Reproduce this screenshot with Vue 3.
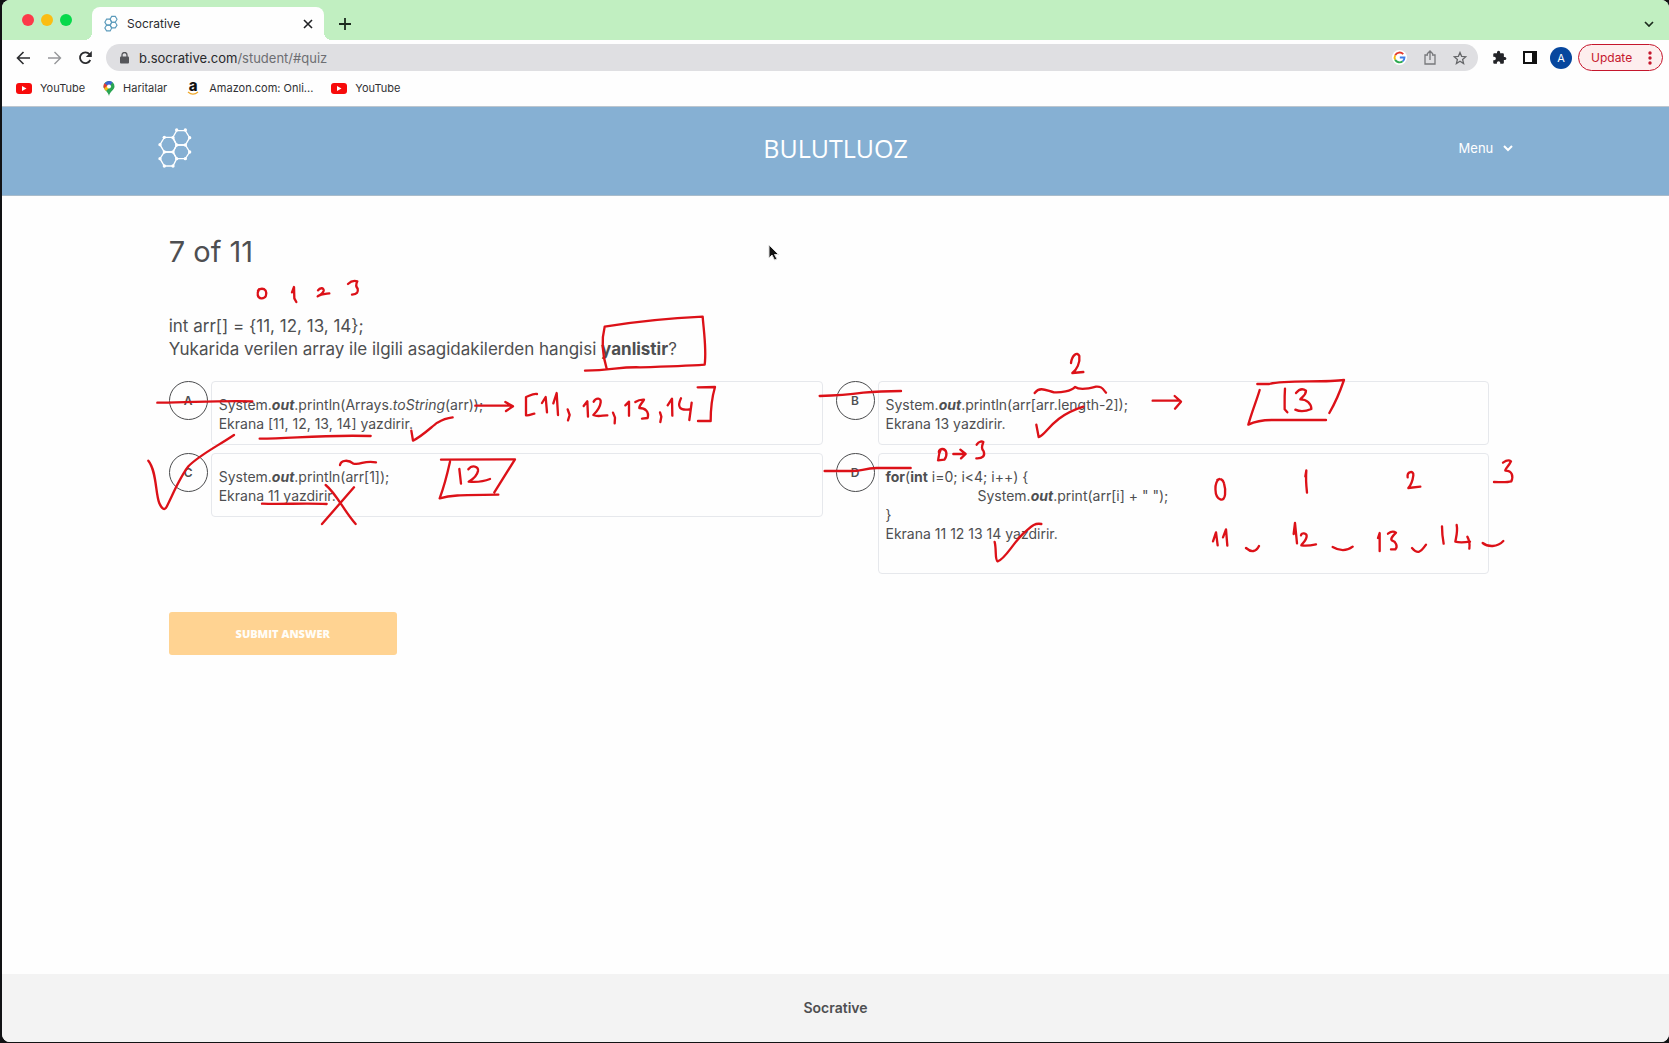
<script setup>
const bookmarks = [
  { icon: 'youtube', label: 'YouTube' },
  { icon: 'maps', label: 'Haritalar' },
  { icon: 'amazon', label: 'Amazon.com: Onli...' },
  { icon: 'youtube', label: 'YouTube' },
]

const hexagons = [
  'M530 393H556L569 414L556 436H530L518 414Z',
  'M493 413H519L530 436L519 457H493L480 435Z',
  'M530 436H556L569 457L556 477H530L519 457Z',
  'M493 457H519L530 477L519 499H493L480 477Z',
]
const hexNodes = [
  [530, 391], [556, 391], [569, 414], [556, 436], [530, 436], [519, 414], [493, 413],
  [480, 435], [493, 457], [519, 457], [569, 457], [556, 477], [530, 477], [480, 477], [493, 499], [519, 499],
]

// Pen strokes grouped by sheet area; every group is drawn at three times its final size.
const ink = [
  {
    x: 140, y: 220,
    strokes: [
      'M357 208C350 220 352 234 364 235C378 236 382 222 377 212C371 204 361 205 354 211',
      'M456 217L462 201L463 235L469 246',
      'M534 211C540 202 552 203 551 212C549 220 538 226 533 229C542 222 552 222 568 220',
      'M624 192C633 183 642 181 652 184C648 192 646 199 653 206C655 216 652 223 636 224',
      'M52 548C140 549 220 541 337 544',
      'M359 656C460 656 530 644 692 648',
      'M814 632L819 662C850 646 875 620 892 608C905 600 920 594 938 592',
      'M25 722C50 752 46 820 58 850C66 868 74 872 80 860C100 820 120 770 146 738C180 704 230 680 282 645',
      'M600 735C603 720 625 718 640 731C665 736 670 720 708 727',
      'M366 851C430 853 500 849 560 852',
      'M557 795C590 822 610 870 647 912M642 802L546 912',
    ],
  },
  {
    x: 400, y: 300,
    strokes: [
      'M555 212C640 210 660 200 720 202C800 200 860 198 914 194C920 150 912 100 908 50C820 54 700 66 614 80C604 120 606 160 620 206',
      'M226 317H336M316 306L339 319L318 333',
      'M411 282C398 280 388 288 378 291V346C386 348 396 342 403 341',
      'M426 309L437 291L441 337M460 310L470 279L474 345',
      'M503 328L509 345L504 361',
      'M551 318L562 304L564 350M581 305C588 292 604 293 602 307C600 325 588 337 580 345C594 352 610 345 622 346',
      'M639 338L645 353L644 370',
      'M676 316L687 305V347M706 306C718 298 726 299 732 299C726 310 717 317 718 324C735 324 748 334 743 354L726 356',
      'M780 337L784 350L781 366M803 316L816 296L817 347M843 295C830 322 840 332 868 328M875 308L868 360',
      'M893 262L945 261C936 292 932 330 932 363H894',
      'M123 479L345 478L283 577M150 485C140 530 132 560 119 595C150 586 170 585 295 584',
      'M178 507L183 551M205 508C216 494 236 498 234 513C230 532 214 540 206 545C230 547 248 546 270 537',
    ],
  },
  {
    x: 810, y: 340,
    strokes: [
      'M783 69C786 45 802 34 808 48C811 68 800 90 787 99L820 96',
      'M29 168C100 166 130 162 160 158C200 154 230 153 273 153',
      'M674 159C690 138 710 152 732 157C752 158 784 154 795 141C810 152 836 146 858 140C878 138 880 150 888 158',
      'M679 254L686 291C710 286 720 232 820 200',
      'M44 393H120C150 394 160 386 200 384H302',
      'M392 330C384 344 386 360 384 361L403 359C414 346 410 326 396 327C388 328 384 335 388 340',
      'M430 342H464M451 329L467 342L453 355',
      'M500 314C507 302 517 304 520 306C515 320 514 326 521 334C526 348 518 356 499 355',
      'M554 606C560 630 554 660 563 664C585 658 605 615 640 580C662 562 670 548 694 552',
    ],
  },
  {
    x: 1140, y: 360,
    strokes: [
      'M38 122H120M104 108L123 125L105 146',
      'M352 72H388C430 60 550 68 612 60C600 95 585 130 568 159M359 90C352 115 334 160 325 194C345 184 365 180 395 180H558',
      'M435 86C433 115 434 130 434 148L442 157M468 99C480 84 490 86 498 92C498 106 484 112 481 118C500 118 514 130 514 147C500 153 480 156 466 149',
      'M238 357C222 366 222 412 241 418C258 424 258 390 252 370C249 358 240 354 232 360',
      'M496 349L499 331C497 355 499 380 501 398',
      'M803 352C800 334 822 330 820 346C818 362 812 376 805 384L841 380',
      'M1089 308C1100 300 1108 300 1113 304C1106 320 1094 326 1096 332C1118 332 1120 350 1114 364C1100 368 1080 366 1062 366',
      'M219 544L228 517L233 556M249 532L258 508L262 557',
      'M461 522L465 489L471 550M483 526C484 516 500 520 500 528C500 542 486 550 484 556C500 558 514 556 528 553',
      'M318 564C334 578 348 576 357 558M578 561C600 574 622 572 638 560',
      'M714 534L719 519V573M744 521C753 514 762 514 768 518C756 530 750 538 757 542C768 545 774 560 766 568H753',
      'M816 564C832 582 840 580 858 554',
      'M906 499C906 520 908 535 911 551M950 495C954 515 948 532 946 545C960 549 976 547 990 545M982 530C990 545 990 552 988 566',
      'M1028 549C1044 562 1072 562 1090 543',
    ],
  },
]
</script>

<template>
  <div class="window">
    <div class="tabstrip">
      <div class="lights"><i class="red"></i><i class="yellow"></i><i class="green"></i></div>
      <div class="tab">
        <svg class="favicon" viewBox="474 385 102 120" width="14" height="17">
          <path v-for="h in hexagons" :key="h" :d="h" fill="none" stroke="#5b9abb" stroke-width="8" />
        </svg>
        <span class="tab-title">Socrative</span>
        <button type="button" class="plain" aria-label="Close tab">
          <svg width="10" height="10" viewBox="0 0 10 10"><path d="M1 1L9 9M9 1L1 9" stroke="#202124" stroke-width="1.6" /></svg>
        </button>
      </div>
      <button type="button" class="plain new-tab" aria-label="New tab">
        <svg width="12" height="12" viewBox="0 0 12 12"><path d="M6 0V12M0 6H12" stroke="#1c2b1e" stroke-width="1.8" /></svg>
      </button>
      <button type="button" class="plain tab-search" aria-label="Search tabs">
        <svg width="10" height="6" viewBox="0 0 10 6"><path d="M1 1L5 5L9 1" fill="none" stroke="#1c2b1e" stroke-width="1.7" /></svg>
      </button>
    </div>

    <div class="toolbar">
      <div class="nav">
        <button type="button" class="plain" aria-label="Back">
          <svg width="15" height="14" viewBox="0 0 15 14"><path d="M14 7H2M7.500 1L1.500 7L7.500 13" fill="none" stroke="#2c2d30" stroke-width="1.6" /></svg>
        </button>
        <button type="button" class="plain" aria-label="Forward">
          <svg width="15" height="14" viewBox="0 0 15 14"><path d="M1 7H13M7.500 1L13.500 7L7.500 13" fill="none" stroke="#96979a" stroke-width="1.4" /></svg>
        </button>
        <button type="button" class="plain" aria-label="Reload">
          <svg width="15" height="14" viewBox="0 0 15 14"><path d="M11.500 3.200A5.400 5.400 0 1 0 12.300 9" fill="none" stroke="#2c2d30" stroke-width="1.8" /><path d="M13.800 0V6H7.800Z" fill="#2c2d30" /></svg>
        </button>
      </div>
      <div class="omnibox">
        <svg width="9" height="12" viewBox="0 0 9 12"><rect y="4.500" width="9" height="7" rx="1" fill="#55565a" /><path d="M2 5V3A2.500 2.500 0 0 1 7 3V5" fill="none" stroke="#55565a" stroke-width="1.3" /></svg>
        <div class="url">b.socrative.com<span>/student/#quiz</span></div>
        <div class="omni-icons">
          <svg width="15" height="15" viewBox="0 0 48 48">
            <circle cx="24" cy="24" r="24" fill="#fff" />
            <path d="M36 13A16 16 0 0 0 10 17" fill="none" stroke="#e33b2e" stroke-width="6" />
            <path d="M10 17A16 16 0 0 0 10 31" fill="none" stroke="#f6b90c" stroke-width="6" />
            <path d="M10 31A16 16 0 0 0 34 36" fill="none" stroke="#2da94f" stroke-width="6" />
            <path d="M34 36A15 15 0 0 0 40 24H25" fill="none" stroke="#3f7fe8" stroke-width="6" />
          </svg>
          <svg width="12" height="15" viewBox="0 0 12 15"><path d="M4 5H1V14H11V5H8M6 10V1M3 4L6 1L9 4" fill="none" stroke="#77787b" stroke-width="1.300" /></svg>
          <svg width="14" height="14" viewBox="0 0 14 14"><path d="M7 1.500L8.600 5.300L12.800 5.700L9.600 8.400L10.600 12.500L7 10.300L3.400 12.500L4.400 8.400L1.200 5.700L5.400 5.300Z" fill="none" stroke="#66676a" stroke-width="1.300" /></svg>
        </div>
      </div>
      <div class="actions">
        <svg width="15" height="15" viewBox="0 0 24 24"><path fill="#232428" d="M20.500 11H19V7c0-1.100-.9-2-2-2h-4V3.500a2.500 2.500 0 0 0-5 0V5H4c-1.100 0-2 .9-2 2v3.800h1.500a2.700 2.700 0 0 1 0 5.400H2V20c0 1.100.9 2 2 2h3.800v-1.500a2.700 2.700 0 0 1 5.400 0V22H17c1.100 0 2-.9 2-2v-4h1.500a2.500 2.500 0 0 0 0-5z" /></svg>
        <svg width="14" height="13" viewBox="0 0 14 13"><rect x="1" y="1" width="12" height="11" fill="#fff" stroke="#111" stroke-width="2" /><rect x="9" width="5" height="13" fill="#111" /></svg>
        <span class="avatar">A</span>
        <button type="button" class="update">Update
          <svg width="4" height="14" viewBox="0 0 4 14" fill="#c5162c"><circle cx="2" cy="2" r="1.700" /><circle cx="2" cy="7" r="1.700" /><circle cx="2" cy="12" r="1.700" /></svg>
        </button>
      </div>
    </div>

    <nav class="bookmarks">
      <a v-for="(b, i) in bookmarks" :key="i" href="#">
        <svg v-if="b.icon === 'youtube'" width="16" height="11" viewBox="0 0 16 11"><rect width="16" height="11" rx="3" fill="#f70b0b" /><path d="M6 3L10.500 5.500L6 8Z" fill="#fff" /></svg>
        <svg v-else-if="b.icon === 'maps'" width="12" height="15" viewBox="0 0 12 15">
          <path d="M6 0A5.500 5.500 0 0 0 .5 5.500C.5 9 5 10 6 15C7 10 11.500 9 11.500 5.500A5.500 5.500 0 0 0 6 0Z" fill="#2aa553" />
          <path d="M6 0A5.500 5.500 0 0 0 1.500 2.500L6 6L9.500 1.200A5.500 5.500 0 0 0 6 0Z" fill="#3d62cf" />
          <path d="M1.500 2.300A5.500 5.500 0 0 0 1 7.500L6 5.500Z" fill="#e13c35" />
          <path d="M1 7.500L3 10L7.500 5.500L4 5Z" fill="#f6bd16" />
          <circle cx="6" cy="5.500" r="2" fill="#fff" />
        </svg>
        <span v-else class="amazon">a<svg width="12" height="4" viewBox="0 0 12 4"><path d="M1 1C4 3.500 8 3.500 11 1" fill="none" stroke="#f0a92c" stroke-width="1.300" /></svg></span>
        <span>{{ b.label }}</span>
      </a>
    </nav>

    <header class="room">
      <div class="room-inner">
        <svg viewBox="474 385 102 120" width="34" height="40" fill="none" stroke="#fff" stroke-width="4">
          <path v-for="h in hexagons" :key="h" :d="h" />
          <circle v-for="(n, i) in hexNodes" :key="i" :cx="n[0]" :cy="n[1]" r="5" fill="#fff" stroke="none" />
        </svg>
        <div class="room-name">BULUTLUOZ</div>
        <button type="button" class="plain menu">Menu
          <svg width="10" height="7" viewBox="0 0 10 7"><path d="M1 1L5 5L9 1" fill="none" stroke="#fff" stroke-width="2" /></svg>
        </button>
      </div>
    </header>

    <main>
      <h1>7 of 11</h1>
      <p class="question">int arr[] = {11, 12, 13, 14};<br>Yukarida verilen array ile ilgili asagidakilerden hangisi <b>yanlistir</b>?</p>
      <div class="answers">
        <div class="answer">
          <button type="button" class="letter">A</button>
          <div class="box">
            <div>System.<b><i>out</i></b>.println(Arrays.<i>toString</i>(arr));</div>
            <div>Ekrana [11, 12, 13, 14] yazdirir.</div>
          </div>
        </div>
        <div class="answer">
          <button type="button" class="letter">B</button>
          <div class="box">
            <div>System.<b><i>out</i></b>.println(arr[arr.length-2]);</div>
            <div>Ekrana 13 yazdirir.</div>
          </div>
        </div>
        <div class="answer">
          <button type="button" class="letter">C</button>
          <div class="box">
            <div>System.<b><i>out</i></b>.println(arr[1]);</div>
            <div>Ekrana 11 yazdirir.</div>
          </div>
        </div>
        <div class="answer">
          <button type="button" class="letter">D</button>
          <div class="box">
            <div><b>for</b>(<b>int</b> i=0; i&lt;4; i++) {</div>
            <div class="indent">System.<b><i>out</i></b>.print(arr[i] + " ");</div>
            <div>}</div>
            <div>Ekrana 11 12 13 14 yazdirir.</div>
            <br>
          </div>
        </div>
      </div>
      <button type="button" class="submit">SUBMIT ANSWER</button>
    </main>

    <footer>Socrative</footer>

    <svg class="ink" viewBox="0 0 1669 1043" width="1669" height="1043" aria-hidden="true">
      <g v-for="g in ink" :key="g.x" :transform="`translate(${g.x} ${g.y}) scale(0.33333)`">
        <path v-for="s in g.strokes" :key="s" :d="s" />
      </g>
      <path class="pointer" d="M769 245V258L772 255L774.500 260L777 259L774.500 254.500H778.500Z" />
    </svg>
  </div>
</template>

<style>
body {
  margin: 0;
  background: #111214;
}
</style>

<style scoped>
* {
  box-sizing: border-box;
}

.window {
  position: relative;
  display: flex;
  flex-direction: column;
  min-height: calc(100vh - 1px);
  margin: 0 0 1px 2px;
  overflow: hidden;
  border-radius: 8px;
  background: #fefefe;
  color: #4e4f51;
  font-family: Inter, "Liberation Sans", sans-serif;
}

svg {
  flex: none;
}

button {
  font-family: inherit;
}

.plain {
  display: flex;
  align-items: center;
  padding: 0;
  border: 0;
  background: none;
}

.tabstrip {
  display: flex;
  align-items: flex-end;
  height: 40px;
  background: #c1efc1;
}

.lights {
  display: flex;
  gap: 7px;
  width: 90px;
  height: 26px;
  padding-left: 20px;
}

.lights i {
  width: 12px;
  height: 12px;
  border-radius: 50%;
}

.red {
  background: #fc3a4a;
}

.yellow {
  background: #fbbd13;
}

.green {
  background: #07d94b;
}

.tab {
  position: relative;
  display: flex;
  align-items: center;
  width: 232px;
  height: 33px;
  padding: 0 11px 0 12px;
  border-radius: 8px 8px 0 0;
  background: #fefefe;
}

.tab::before,
.tab::after {
  position: absolute;
  bottom: 0;
  width: 8px;
  height: 8px;
  content: "";
}

.tab::before {
  right: 100%;
  background: radial-gradient(circle at 0 0, transparent 8px, #fefefe 8px);
}

.tab::after {
  left: 100%;
  background: radial-gradient(circle at 100% 0, transparent 8px, #fefefe 8px);
}

.tab-title {
  flex: 1;
  padding-left: 9px;
  color: #2a2b2e;
  font-size: 12px;
}

.new-tab {
  height: 33px;
  margin-left: 15px;
}

.tab-search {
  height: 33px;
  margin: 0 15px 0 auto;
}

.toolbar {
  display: flex;
  align-items: center;
  height: 35px;
  padding: 0 6px 0 14px;
}

.nav {
  display: flex;
  gap: 16px;
  width: 90px;
}

.omnibox {
  display: flex;
  flex: 1;
  align-items: center;
  height: 27px;
  padding: 0 11px 0 14px;
  border-radius: 14px;
  background: #dfdfe2;
}

.url {
  flex: 1;
  padding-left: 10px;
  color: #28292c;
  font-size: 13px;
}

.url span {
  color: #6d6e72;
}

.omni-icons {
  display: flex;
  align-items: center;
  gap: 17px;
}

.actions {
  display: flex;
  align-items: center;
  padding-left: 14px;
}

.actions > svg {
  margin-right: 16px;
}

.avatar {
  width: 22px;
  height: 22px;
  margin: 0 6px 0 -3px;
  border-radius: 50%;
  background: #07479e;
  color: #fff;
  font-size: 11px;
  line-height: 22px;
  text-align: center;
}

.update {
  display: flex;
  align-items: center;
  justify-content: space-between;
  width: 85px;
  height: 27px;
  padding: 0 10px 0 12px;
  border: 1px solid #c5162c;
  border-radius: 14px;
  background: #fdeeee;
  color: #c5162c;
  font-size: 12px;
}

.bookmarks {
  display: flex;
  align-items: center;
  gap: 18px;
  height: 32px;
  padding: 0 14px 5px;
  border-bottom: 1px solid #bcc6cf;
}

.bookmarks a {
  display: flex;
  align-items: center;
  gap: 8px;
  color: #303134;
  font-size: 11px;
  text-decoration: none;
}

.amazon {
  display: flex;
  flex-direction: column;
  align-items: center;
  width: 16px;
  color: #111;
  font-size: 15px;
  font-weight: 800;
  line-height: 10px;
}

.room {
  height: 89px;
  padding-bottom: 6px;
  border-bottom: 1px solid #a9bccb;
  background: #86b0d3;
  color: #fff;
}

.room-inner {
  display: grid;
  grid-template-columns: 1fr auto 1fr;
  align-items: center;
  width: calc(80% + 22px);
  height: 100%;
  margin: 0 auto;
}

.room-name {
  font-family: "Open Sans", sans-serif;
  font-size: 25px;
}

.menu {
  gap: 10px;
  justify-self: end;
  color: #fff;
  font-size: 13px;
}

main {
  flex: 1;
  width: 80%;
  margin: 0 auto;
  padding: 38px 0 40px;
}

h1 {
  margin: 0 0 45px;
  font-size: 29px;
  font-weight: 400;
  line-height: 36px;
}

.question {
  margin: 0 0 20px;
  font-size: 17px;
  line-height: 23px;
}

.answers {
  display: grid;
  grid-template-columns: 1fr 1fr;
}

.answer {
  display: flex;
  align-items: flex-start;
  gap: 3px;
  padding: 0 13px 8px 0;
}

.letter {
  flex: none;
  width: 39px;
  height: 39px;
  padding: 0;
  border: 1px solid #4a4b4d;
  border-radius: 50%;
  background: none;
  color: #4e4f51;
  font-size: 12px;
  font-weight: 600;
}

.box {
  flex: 1;
  padding: 13px 7px 11px;
  border: 1px solid #e6e8ec;
  border-radius: 4px;
  font-size: 14px;
  line-height: 19px;
}

.indent {
  padding-left: 92px;
}

.submit {
  width: 228px;
  height: 43px;
  margin-top: 30px;
  border: 0;
  border-radius: 3px;
  background: #ffd392;
  color: #fffdf8;
  font-family: "Open Sans", sans-serif;
  font-size: 11px;
  font-weight: 800;
}

footer {
  padding: 24px 0;
  background: #f3f3f3;
  font-size: 14px;
  font-weight: 600;
  line-height: 20px;
  text-align: center;
}

.ink {
  position: absolute;
  top: 0;
  left: -2px;
  pointer-events: none;
}

.ink g {
  fill: none;
  stroke: #dc1118;
  stroke-width: 7;
  stroke-linecap: round;
  stroke-linejoin: round;
}

.pointer {
  fill: #111;
  stroke: #ddd;
  stroke-width: 1;
}
</style>
